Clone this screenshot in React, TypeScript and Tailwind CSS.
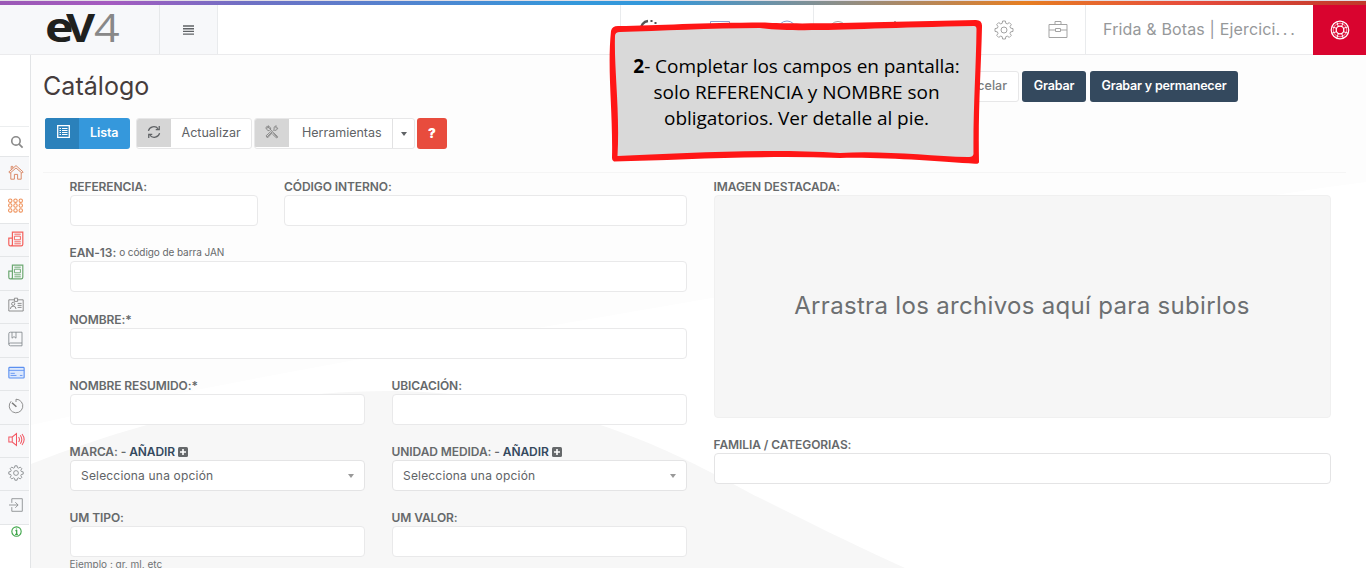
import React from "react";

type P = { children?: React.ReactNode; className?: string };

const Icon = ({ children, className = "" }: P) => (
  <svg viewBox="0 0 20 20" fill="none" stroke="currentColor" strokeWidth="1" className={"shrink-0 " + className}>
    {children}
  </svg>
);

const gearPath =
  "M8.6 1h2.8l.4 2.3 1.5.6 2-1.3 2 2-1.3 2 .6 1.5 2.4.5v2.8l-2.4.5-.6 1.5 1.3 2-2 2-2-1.3-1.5.6-.4 2.3H8.6l-.4-2.3-1.5-.6-2 1.3-2-2 1.3-2-.6-1.5L1 11.400V8.600l2.400-.5.6-1.500-1.300-2 2-2 2 1.300 1.500-.6z";

const Gear = ({ className = "" }: P) => (
  <Icon className={className}>
    <path d={gearPath} strokeLinejoin="round" />
    <circle cx="10" cy="10" r="3" />
  </Icon>
);

const News = ({ className = "" }: P) => (
  <Icon className={className}>
    <path d="M5.500 18V1.500h13V16.500q0 2-2 2H3q-2 0-2-2V9h4.500M5.500 9v7.500q0 2-2 2" strokeWidth="1.500" />
    <path d="M8 4h8M8 6.500h7.500v4.500H8zM8 13.500h8M8 16h8" strokeWidth="1.200" />
  </Icon>
);

const Label = ({ children, className = "" }: P) => (
  <div className={"flex h-[18px] items-center whitespace-nowrap pt-px text-[12px] leading-[17px] font-semibold tracking-[-0.08px] text-[#66696b] " + className}>
    {children}
  </div>
);

const Field = ({ label, className = "", children }: P & { label: React.ReactNode }) => (
  <div className={"h-[66.3px] " + className}>
    <Label>{label}</Label>
    {children ?? <div className="h-[31px] rounded-[4px] border border-[#e9e9ea] bg-white" />}
  </div>
);

const Select = () => (
  <div className="flex h-[31px] items-center justify-between rounded-[4px] border border-[#e4e4e5] bg-white pr-[10px] pl-[10.500px] text-[12px] tracking-[0.18px] text-[#606366]">
    <span>Selecciona una opción</span>
    <span className="border-x-[3.500px] border-t-[4px] border-x-transparent border-t-[#999]" />
  </div>
);

const Add = ({ text }: { text: string }) => (
  <>
    {text} -&nbsp;<span className="text-[#34495e]">AÑADIR</span>
    <svg viewBox="0 0 10 10" className="ml-[3px] size-[10px]">
      <rect width="10" height="10" rx="1.500" fill="#66696b" />
      <path d="M5 2v6M2 5h6" stroke="#fff" strokeWidth="1.600" />
    </svg>
  </>
);

const Row = ({ children, className = "" }: P) => (
  <div className={"flex h-[33.450px] w-[29px] items-center border-b border-[#e4e6e8] pl-[8px] " + (className.includes("bg-") ? "" : "bg-[#f7f8fa] ") + className}>
    {children}
  </div>
);

const Sidebar = () => (
  <aside className="h-[513px] w-[31px] shrink-0 border-r border-[#e2e4e6] bg-white">
    <div className="h-[72px] w-[29px] border-b border-[#eceeef]" />
    <div className="flex h-[30px] w-[29px] items-center border-b border-[#e4e6e8] pl-[10px] text-[#8a8a8a]">
      <Icon className="size-[14px]">
        <circle cx="8.500" cy="8.500" r="6" strokeWidth="2.300" />
        <path d="m13 13 5 5" strokeWidth="2.500" />
      </Icon>
    </div>
    <Row className="text-[#d98663]">
      <Icon className="-mt-[3px] size-[16px]">
        <path d="M1 10 10 2l9 8-1.500 1.500L10 5l-7.500 6.500zM3.500 11v8H8v-6h4v6h4.500v-8M4 7V3h2v2" strokeWidth="1.200" />
      </Icon>
    </Row>
    <Row className="bg-white text-[#ee8f57]">
      <Icon className="-mt-[3px] size-[15px]">
        {[3.500, 10, 16.500].map((y) => [3, 10, 17].map((x) => <circle key={x + "-" + y} cx={x} cy={y} r="2.300" strokeWidth="1.400" />))}
      </Icon>
    </Row>
    <Row className="text-[#f4605c]"><News className="-mt-[3px] size-[16px]" /></Row>
    <Row className="text-[#6da872]"><News className="-mt-[3px] size-[16px]" /></Row>
    <Row className="text-[#777]">
      <Icon className="-mt-[3px] size-[16px]">
        <path d="M8 3.500H1v14h18v-14h-7M8 1.500h4v4H8zM12 8h5M12 10.500h5M12 13h5" />
        <circle cx="6.500" cy="8.500" r="2" />
        <path d="M3 15q0-3.500 3.500-3.500T10 15" />
      </Icon>
    </Row>
    <Row className="text-[#7b8287]">
      <Icon className="-mt-[3px] size-[16px]">
        <path d="M17.500 15V1.500H3q-2 0-2 2v12.500q0 2.500 2 2.500h14.500V15H3q-2 0-2 1.500M5 1.500V9l2.500-2L10 9V1.500" />
      </Icon>
    </Row>
    <Row className="text-[#5b8ff0]">
      <Icon className="-mt-[3px] size-[17px]">
        <rect x="1" y="4" width="18" height="12.500" rx="1" fill="#dce8fd" strokeWidth="1.300" />
        <path d="M1 7.500h18M3 11h5M3 13.500h7M14 13.500h3" />
      </Icon>
    </Row>
    <Row className="text-[#777]">
      <Icon className="-mt-[3px] size-[16px]">
        <path d="M10 5V1.500A8.500 8.500 0 1 1 4 4" />
        <path d="m5 6 5.500 5" strokeWidth="1.800" />
      </Icon>
    </Row>
    <Row className="text-[#f25561]">
      <Icon className="-mt-[3px] size-[17px]">
        <path d="M1 7h4l5-4v14l-5-4H1zM5 7v6M12.500 7q2 3 0 6M14.500 5q3.500 5 0 10M16.500 3.500q5 6.500 0 13" strokeWidth="1.200" />
      </Icon>
    </Row>
    <Row className="text-[#7c8083]"><Gear className="-mt-[3px] size-[16px]" /></Row>
    <Row className="text-[#85898c]">
      <Icon className="-mt-[5px] ml-px size-[14px]">
        <path d="M4 7V1h15v18H4v-6M0 10h13M9 6l4 4-4 4" strokeWidth="1.200" />
      </Icon>
    </Row>
    <div className="flex h-[14px] items-center pl-[11px] text-[#3fa64a]">
      <Icon className="size-[11px]">
        <circle cx="10" cy="10" r="8.500" strokeWidth="2" />
        <path d="M10 4.500v2M8 8.500h2.300V15M7.500 15.200h5" strokeWidth="2.300" />
      </Icon>
    </div>
  </aside>
);

const Header = () => (
  <header className="flex h-[50px] shrink-0 border-b border-[#ebebed] bg-white">
    <div className="flex h-[49px] w-[160px] shrink-0 items-baseline border-r border-[#e6e8ea] bg-[#f7f8fa] pl-[45px] font-['Open_Sans',sans-serif] leading-[42px] whitespace-nowrap">
      <span className="w-[21px] origin-left scale-x-[1.15] text-[42px] font-bold text-[#1f211e]">e</span>
      <span className="w-[28px] origin-left scale-x-[1.15] text-[39px] font-bold text-[#1f211e]">V</span>
      <span className="origin-left scale-x-[1.15] text-[39px] text-[#888]">4</span>
    </div>
    <div className="flex w-[58px] shrink-0 items-center justify-center border-r border-[#e9ebed] bg-[#f7f8fa] text-[#606366]">
      <svg viewBox="0 0 11 10" className="h-[10px] w-[11px]">
        <path d="M0 1h11M0 3.700h11M0 6.400h11M0 9.100h11" stroke="currentColor" strokeWidth="1.400" />
      </svg>
    </div>
    <div className="w-[403px] shrink-0 border-r border-[#e9ebed]" />
    <div className="flex w-[193px] shrink-0 items-center border-r border-[#e9ebed] pl-[18px] text-[#8aa0d0]">
      <Icon className="-mt-[2px] size-[20px] text-[#555]">
        <path d="M2 11A8 8 0 0 1 9 2" strokeWidth="2.400" />
        <path d="M11.500 2h2M15.500 4h2M18 7h1" strokeWidth="2.200" />
      </Icon>
      <Icon className="ml-[51px] size-[20px]"><path d="M.5 1.500h19v16H.5z" /></Icon>
      <Icon className="ml-[47px] size-[20px]"><circle cx="10" cy="10" r="9" /></Icon>
    </div>
    <div className="flex w-[272px] shrink-0 items-center border-r border-[#e9ebed] pl-[14px] text-[#a3a3a3]">
      <Icon className="size-[20px]"><circle cx="10" cy="10" r="8.500" /></Icon>
      <Icon className="ml-[37px] size-[20px]"><path d="M10 1 3 9v9h14V9z" /></Icon>
      <Icon className="ml-[34px] size-[20px]"><path d="m10 1 7 8v9H3V9z" /></Icon>
      <Gear className="ml-[35px] size-[20px]" />
      <Icon className="ml-[34px] size-[20px]">
        <path d="M1 4.500h18v13H1zM7 4.500v-3h6v3M1 10h6.500M12.500 10H19M7.500 8.500h5v3h-5z" />
      </Icon>
    </div>
    <div className="flex w-[227px] shrink-0 items-center pb-[2px] pl-[17px] text-[16px] tracking-[0.15px] text-[#96989a]">
      <span className="whitespace-nowrap">Frida &amp; Botas | Ejercici<span className="tracking-[2.7px]">...</span></span>
    </div>
    <div className="flex h-[50px] w-[53px] shrink-0 items-center justify-center bg-[#d9042f] text-white">
      <Icon className="-mt-px size-[20px]">
        <circle cx="10" cy="10" r="8.800" strokeWidth="1.200" />
        <circle cx="10" cy="10" r="6.800" strokeWidth=".6" />
        <circle cx="10" cy="10" r="3.800" strokeWidth="1.300" />
        <path d="m8.300 6.500-1.500-4.500M11.700 6.500l1.500-4.500M8.300 13.500l-1.500 4.500M11.700 13.500l1.500 4.500M6.500 8.300 2 6.800M6.500 11.700 2 13.200M13.500 8.300 18 6.800M13.500 11.700 18 13.200" />
      </Icon>
    </div>
  </header>
);

const Toolbar = () => (
  <div className="flex h-[31px] items-stretch pl-[14px] text-[12.500px] text-[#606366]">
    <div className="flex w-[85px] overflow-hidden rounded-[3px] bg-[#3598dc] font-semibold text-white">
      <div className="flex w-[34px] items-center justify-center bg-[#2b81bb]">
        <svg viewBox="0 0 13 13" className="-mt-1 ml-[3px] size-[13px]" fill="none" stroke="currentColor">
          <path d="M.7.7h11.600v11.600H.7z" strokeWidth="1.300" />
          <path d="M2.500 3.500H4M5 3.500h5.500M2.500 5.500H4M5 5.500h5.500M2.500 7.500H4M5 7.500h5.500M2.500 9.500H4M5 9.500h5.500" />
        </svg>
      </div>
      <span className="flex flex-1 items-center pl-[11px] tracking-[-0.1px]">Lista</span>
    </div>
    <div className="ml-[6px] flex w-[116px] overflow-hidden rounded-[3px] border border-[#e7e7e8] bg-white">
      <div className="flex h-[28px] w-[34px] items-center justify-center bg-[#d6d6d6]">
        <Icon className="-mt-[2px] size-[14px]">
          <path d="M2 8.500A8 8 0 0 1 16 5.500M18 11.500A8 8 0 0 1 4 14.500" strokeWidth="1.800" />
          <path d="M17.500 1.500v5h-5M2.500 18.500v-5h5" strokeWidth="1.800" />
        </Icon>
      </div>
      <span className="flex items-center pl-[10.500px] tracking-[0.02px]">Actualizar</span>
    </div>
    <div className="ml-[2px] flex w-[161px] overflow-hidden rounded-[3px] border border-[#e7e7e8] bg-white">
      <div className="flex h-[28px] w-[34px] items-center justify-center bg-[#d6d6d6] text-[#858585]">
        <Icon className="-mt-[2px] size-[14px]">
          <path d="m2 2 3 1 11 13 2 2M3 17l5.500-5.500M11 8.500l2-2V3l3-2-.5 3 3 .5-2.500 3h-3M1.500 15.500 8 9.500l2 2-6.500 7zM12 11l6 5.500-1.500 2L10.500 13M1 4l3 4h2l2-2V4L4.500 1l.5 3z" strokeWidth="1.300" />
        </Icon>
      </div>
      <span className="flex w-[104px] items-center border-r border-[#e2e2e3] pl-[13px]">Herramientas</span>
      <span className="flex flex-1 items-center justify-center"><i className="border-x-[3.500px] border-t-[4px] border-x-transparent border-t-[#606366]" /></span>
    </div>
    <div className="ml-[2px] flex w-[30px] items-center justify-center rounded-[3px] bg-[#e84c3d] text-[13px] font-black text-white">?</div>
  </div>
);

const Callout = () => (
  <div className="absolute top-[18px] left-[608px] h-[148px] w-[378px]">
    <svg viewBox="608 18 378 148" className="absolute inset-0 size-full">
      <path fill="#ff1616" d="M611 31Q612 26 618 26C660 25.500 700 22.500 765 22.500C800 25 900 21.500 976 20Q982.500 20 982 27C981 70 978 110 979 162Q979 164 975 163.700C940 162 890 157 840 158C760 155 680 160 614 161.500Q612 161 612 158C613 110 607 70 611 31Z" />
      <path fill="#d9d9d9" d="M615 36Q615 32 620 32C660 31 710 28 760 28C800 33 860 28 974 26Q976.500 26 976.500 29C976 70 973 110 973.500 154Q973 157.500 968 157C930 156 880 150 840 153C760 148 680 154 617.500 156C620 110 614 70 615 36Z" />
    </svg>
    <p className="relative pt-[35px] pr-[1px] text-center font-['Open_Sans',sans-serif] text-[19px] leading-[26px] tracking-[-0.05px] whitespace-nowrap text-black">
      <b>2</b>- Completar los campos en pantalla:<br />
      solo REFERENCIA y NOMBRE son<br />
      obligatorios. Ver detalle al pie.
    </p>
  </div>
);

export default function App() {
  return (
    <div className="relative flex h-[568px] w-[1366px] flex-col overflow-hidden bg-[#fdfdfd] font-['Inter',sans-serif]">
      <div className="h-[5px] shrink-0 border-t border-[#e3dfe6] bg-[linear-gradient(90deg,#9b59b6_0%,#a55bc0_8%,#6f70c4_18%,#3498db_42%,#3498db_48%,#8a8f8c_61%,#e67e22_75%,#e74c3c_87%,#c0392b_100%)]" />
      <Header />
      <div className="flex flex-1">
        <Sidebar />
        <main className="relative min-w-0 flex-1">
          <svg viewBox="31 55 1335 513" className="absolute inset-0 h-[513px] w-[1335px]">
            <path fill="#fff" d="M31 425C250 375 500 335 700 300C950 258 1150 210 1366 182V568H31z" />
            <path fill="#f7f7f7" d="M31 464C150 417 270 391 390 391C580 393 690 462 760 498C810 523 860 548 905 568H31z" />
          </svg>
          <div className="relative">
            <div className="flex h-[63px] justify-between pt-[16px] pr-[128px] pl-[12px]">
              <h1 className="text-[25px] leading-[31px] tracking-[0.05px] text-[#453c3c]">Catálogo</h1>
              <div className="flex h-[31px] gap-[3px] text-[12.500px] font-semibold text-white">
                <span className="flex w-[76px] items-center justify-end rounded-[3px] border border-[#e7e7e8] bg-white pr-[11px] font-medium text-[#7a7d80]">Cancelar</span>
                <span className="flex w-[64px] items-center justify-center rounded-[3px] bg-[#34495e] tracking-[-0.15px]">Grabar</span>
                <span className="ml-px flex w-[148px] items-center justify-center rounded-[3px] bg-[#34495e] tracking-[-0.19px]">Grabar y permanecer</span>
              </div>
            </div>
            <Toolbar />
            <div className="mt-[23px] mr-[20px] ml-[12px] border-t border-[#f5f5f5]" />
            <div className="mt-[4px] flex gap-[27px] pl-[38.500px]">
              <div className="w-[617px]">
                <div className="flex gap-[26px]">
                  <Field className="w-[188.500px]" label="REFERENCIA:" />
                  <Field className="flex-1" label="CÓDIGO INTERNO:" />
                </div>
                <Field label={<>EAN-13:<span className="ml-[3px] text-[10px] font-normal">o código de barra JAN</span></>} />
                <Field label="NOMBRE:*" />
                <div className="flex gap-[27px]">
                  <Field className="flex-1" label="NOMBRE RESUMIDO:*" />
                  <Field className="flex-1" label="UBICACIÓN:" />
                </div>
                <div className="flex gap-[27px]">
                  <Field className="flex-1" label={<Add text="MARCA:" />}><Select /></Field>
                  <Field className="flex-1" label={<Add text="UNIDAD MEDIDA:" />}><Select /></Field>
                </div>
                <div className="flex gap-[27px]">
                  <Field className="flex-1" label="UM TIPO:">
                    <div className="h-[31px] rounded-[4px] border border-[#e9e9ea] bg-white" />
                    <div className="text-[10px] leading-[15px] text-[#707375]">Ejemplo : gr, ml, etc</div>
                  </Field>
                  <Field className="flex-1" label="UM VALOR:" />
                </div>
              </div>
              <div className="w-[617px]">
                <Label>IMAGEN DESTACADA:</Label>
                <div className="flex h-[223px] items-center justify-center rounded-[4px] border border-[#f0f0f0] bg-[#f6f6f6] pb-[2px] text-[24px] tracking-[0.32px] text-[#6c6f71]">
                  Arrastra los archivos aquí para subirlos
                </div>
                <Label className="mt-[17px]">FAMILIA / CATEGORIAS:</Label>
                <div className="h-[31px] rounded-[4px] border border-[#e4e4e5] bg-white" />
              </div>
            </div>
          </div>
        </main>
      </div>
      <Callout />
    </div>
  );
}
